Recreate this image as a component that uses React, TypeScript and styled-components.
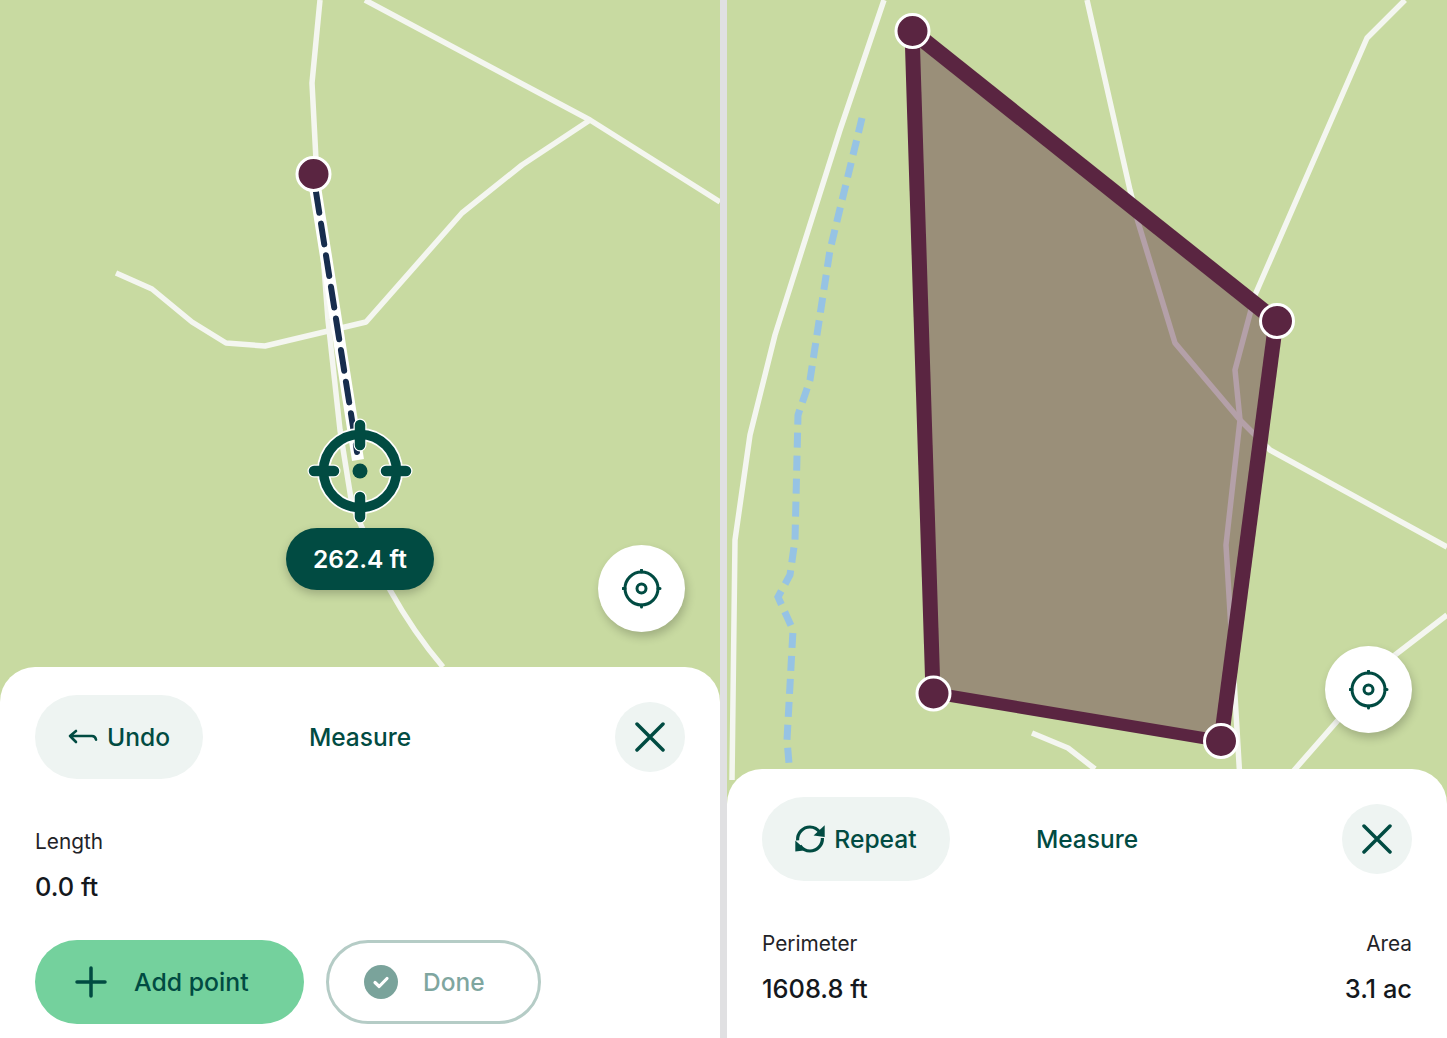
import styled, { createGlobalStyle } from "styled-components";

const DARK = "#014b42";
const PLUM = "#5a2541";
const GLOW = "#f4f6f0";

const GlobalStyle = createGlobalStyle`
  html, body {
    margin: 0;
    padding: 0;
    background: #fff;
    font-family: Inter, "Noto Sans", sans-serif;
  }
`;

const Screen = styled.div`
  display: flex;
  width: 1447px;
  height: 1038px;
  overflow: hidden;
`;

const Panel = styled.section`
  position: relative;
  display: flex;
  flex-direction: column;
  justify-content: flex-end;
  width: 720px;
  height: 1038px;
  background: #c8daa1;
  overflow: hidden;
`;

const Divider = styled.div`
  width: 7px;
  background: #e0e0e2;
`;

const MapLayer = styled.svg`
  position: absolute;
  inset: 0;
  width: 720px;
  height: 1038px;
`;

const Road = styled.path`
  fill: none;
  stroke: ${GLOW};
  stroke-width: 5.5;
  stroke-linejoin: round;
`;

const Creek = styled.path`
  fill: none;
  stroke: #96c3e4;
  stroke-width: 7;
  stroke-dasharray: 15 8;
`;

const Edge = styled.line<{ $w: number }>`
  stroke: ${PLUM};
  stroke-width: ${(p) => p.$w};
`;

const Vertex = styled.circle`
  fill: ${PLUM};
  stroke: #fff;
  stroke-width: 3;
`;

const Pill = styled.div`
  position: absolute;
  left: 286px;
  top: 528px;
  display: flex;
  align-items: center;
  justify-content: center;
  width: 148px;
  height: 62px;
  border-radius: 31px;
  background: ${DARK};
  color: #fff;
  font-size: 24.5px;
  font-weight: 600;
  box-shadow: 0 4px 10px rgba(0, 0, 0, 0.22);
`;

const LocateButton = styled.div<{ $left: number; $top: number }>`
  position: absolute;
  left: ${(p) => p.$left}px;
  top: ${(p) => p.$top}px;
  display: flex;
  align-items: center;
  justify-content: center;
  width: 87px;
  height: 87px;
  border-radius: 50%;
  background: #fff;
  box-shadow: 2px 5px 10px rgba(0, 0, 0, 0.2);
`;

const Sheet = styled.div<{ $height: number }>`
  position: relative;
  display: flex;
  flex-direction: column;
  box-sizing: border-box;
  height: ${(p) => p.$height}px;
  padding: 28px 35px 0;
  background: #fff;
  border-radius: 35px 35px 0 0;
`;

const Header = styled.div`
  display: grid;
  grid-template-columns: 1fr auto 1fr;
  align-items: center;
  height: 84px;
`;

const Title = styled.div`
  color: ${DARK};
  font-size: 24.5px;
  font-weight: 500;
`;

const BackButton = styled.div<{ $width: number; $gap: number }>`
  display: flex;
  align-items: center;
  justify-content: center;
  gap: ${(p) => p.$gap}px;
  box-sizing: border-box;
  width: ${(p) => p.$width}px;
  height: 84px;
  border-radius: 42px;
  background: #eef4f2;
  color: ${DARK};
  font-size: 24.6px;
  font-weight: 500;
`;

const CloseButton = styled.div`
  justify-self: end;
  display: flex;
  align-items: center;
  justify-content: center;
  width: 70px;
  height: 70px;
  border-radius: 50%;
  background: #eef4f2;
`;

const Stats = styled.div`
  display: flex;
  justify-content: space-between;
  margin-top: 49px;
`;

const Stat = styled.div<{ $right?: boolean }>`
  display: flex;
  flex-direction: column;
  gap: 15px;
  text-align: ${(p) => (p.$right ? "right" : "left")};
`;

const StatLabel = styled.div`
  color: #1f2328;
  font-size: 20.8px;
  line-height: 28px;
  font-weight: 400;
`;

const StatValue = styled.div`
  color: #14181d;
  font-size: 25.4px;
  line-height: 32px;
  font-weight: 500;
`;

const Actions = styled.div`
  display: flex;
  gap: 22px;
  margin-top: 37px;
`;

const AddButton = styled.div`
  display: flex;
  align-items: center;
  gap: 27px;
  box-sizing: border-box;
  width: 269px;
  height: 84px;
  padding-left: 40px;
  border-radius: 42px;
  background: #74d19d;
  color: ${DARK};
  font-size: 24.8px;
  font-weight: 500;
`;

const DoneButton = styled.div`
  display: flex;
  align-items: center;
  gap: 25px;
  box-sizing: border-box;
  width: 215px;
  height: 84px;
  padding-left: 35px;
  border: 3.5px solid #b5ccc6;
  border-radius: 42px;
  color: #7fa69f;
  font-size: 24.5px;
  font-weight: 500;
`;

const IconStroke = styled.svg`
  display: block;
  flex: none;
  fill: none;
  stroke: ${DARK};
  stroke-linecap: round;
  stroke-linejoin: round;
`;

function LocateIcon() {
  return (
    <IconStroke width="40" height="40" viewBox="0 0 40 40" strokeWidth="3">
      <circle cx="19.500" cy="19.500" r="16.500" />
      <circle cx="19.500" cy="19.500" r="4.500" />
      <path d="M19.500 1v2M19.500 36v2M1 19.500h2M36 19.500h2" />
    </IconStroke>
  );
}

function CloseIcon() {
  return (
    <IconStroke width="30" height="30" viewBox="0 0 30 30" strokeWidth="3.5">
      <path d="M2 2l26 26M28 2L2 28" />
    </IconStroke>
  );
}

function UndoIcon() {
  return (
    <IconStroke width="30" height="16" viewBox="0 0 30 16" strokeWidth="2.6">
      <path d="M8 2L2 7l6 6M2 7h22c2.400 0 3.600 1.200 4 3.600" />
    </IconStroke>
  );
}

function RepeatIcon() {
  return (
    <svg width="30" height="30" viewBox="0 0 30 30" fill={DARK}>
      <path d="M2.600 16.300C2.200 9 8 3 15 3c4 0 7.400 1.800 10 5.400" fill="none" stroke={DARK} strokeWidth="3.200" />
      <path d="M29.700 1.300V13L18.600 11.400z" />
      <path d="M27.400 14C27.800 21 22 27 15 27c-4 0-7.400-1.800-10-5.400" fill="none" stroke={DARK} strokeWidth="3.200" />
      <path d="M.3 16.500v11l10.800-1.200z" />
    </svg>
  );
}

function PlusIcon() {
  return (
    <IconStroke width="32" height="32" viewBox="0 0 32 32" strokeWidth="3.5">
      <path d="M16 2v28M2 16h28" />
    </IconStroke>
  );
}

function DoneIcon() {
  return (
    <svg width="34" height="34" viewBox="0 0 34 34">
      <circle cx="17" cy="17" r="17" fill="#7aa39b" />
      <path d="M11 17.500l4.200 4 7.800-8" fill="none" stroke="#fff" strokeWidth="3.200" strokeLinecap="round" strokeLinejoin="round" />
    </svg>
  );
}

function LineMap() {
  return (
    <MapLayer viewBox="0 0 720 1038">
      <Road d="M320 0L312 83L316 160L328 320L340 430L352 505L390 590C405 617 420 640 443 667" />
      <Road d="M365 0L590 120L720 202" />
      <Road d="M590 120L522 165L462 213L366 322L265 346L226 343L192 322L152 289L116 273" />
      <path d="M313 174L358 460" stroke="#fff" strokeWidth="12" fill="none" />
      <path d="M316 192L357 452" stroke="#172d4d" strokeWidth="6" strokeLinecap="round" strokeDasharray="21 11" fill="none" />
      <Vertex cx="313.500" cy="174" r="16.500" />
      <g fill="none" stroke="#fff" strokeLinecap="round">
        <circle cx="360" cy="471" r="36.500" strokeWidth="13" />
        <path d="M360 425V445M360 497V517M314 471H334M386 471H406" strokeWidth="13" />
      </g>
      <circle cx="360" cy="471" r="7.500" fill={DARK} />
      <g fill="none" stroke={DARK} strokeLinecap="round">
        <circle cx="360" cy="471" r="36.500" strokeWidth="9.500" />
        <path d="M360 425V445M360 497V517M314 471H334M386 471H406" strokeWidth="10.500" />
      </g>
    </MapLayer>
  );
}

function AreaMap() {
  return (
    <MapLayer viewBox="727 0 720 1038">
      <Road d="M884 0L840 130L775 335L750 435L735 540L732 780" />
      <Road d="M1087 0L1130 190L1138 222L1175 343L1240 420L1270 450L1447 547" />
      <Road d="M1405 0L1367 38L1255 295L1235 370L1240 420L1226 545L1240 780" />
      <Road d="M1447 615L1395 655L1290 775" />
      <Road d="M1032 733L1068 748L1095 769" />
      <Creek d="M862 118L830 250L810 380L798 415L795 540L790 575L778 597L793 630L787 740L790 775" />
      <polygon points="912,31 1276,321 1221,741 933,693" fill={PLUM} fillOpacity="0.41" />
      <Edge $w={16} x1="912" y1="31" x2="1276" y2="321" />
      <Edge $w={15} x1="1276" y1="321" x2="1221" y2="741" />
      <Edge $w={12} x1="1221" y1="741" x2="933" y2="693" />
      <Edge $w={15} x1="933" y1="693" x2="912" y2="31" />
      <Vertex cx="912.500" cy="31" r="16.500" />
      <Vertex cx="1277" cy="321" r="16.500" />
      <Vertex cx="1221" cy="741" r="16.500" />
      <Vertex cx="933.500" cy="693.500" r="16.500" />
    </MapLayer>
  );
}

export default function App() {
  return (
    <Screen>
      <GlobalStyle />
      <Panel>
        <LineMap />
        <Pill>262.4 ft</Pill>
        <LocateButton $left={598} $top={545}>
          <LocateIcon />
        </LocateButton>
        <Sheet $height={371}>
          <Header>
            <BackButton $width={168} $gap={9}>
              <UndoIcon />
              Undo
            </BackButton>
            <Title>Measure</Title>
            <CloseButton>
              <CloseIcon />
            </CloseButton>
          </Header>
          <Stats>
            <Stat>
              <StatLabel>Length</StatLabel>
              <StatValue>0.0 ft</StatValue>
            </Stat>
          </Stats>
          <Actions>
            <AddButton>
              <PlusIcon />
              Add point
            </AddButton>
            <DoneButton>
              <DoneIcon />
              Done
            </DoneButton>
          </Actions>
        </Sheet>
      </Panel>
      <Divider />
      <Panel>
        <AreaMap />
        <LocateButton $left={598} $top={646}>
          <LocateIcon />
        </LocateButton>
        <Sheet $height={269.5}>
          <Header>
            <BackButton $width={188} $gap={9}>
              <RepeatIcon />
              Repeat
            </BackButton>
            <Title>Measure</Title>
            <CloseButton>
              <CloseIcon />
            </CloseButton>
          </Header>
          <Stats>
            <Stat>
              <StatLabel>Perimeter</StatLabel>
              <StatValue>1608.8 ft</StatValue>
            </Stat>
            <Stat $right>
              <StatLabel>Area</StatLabel>
              <StatValue>3.1 ac</StatValue>
            </Stat>
          </Stats>
        </Sheet>
      </Panel>
    </Screen>
  );
}
